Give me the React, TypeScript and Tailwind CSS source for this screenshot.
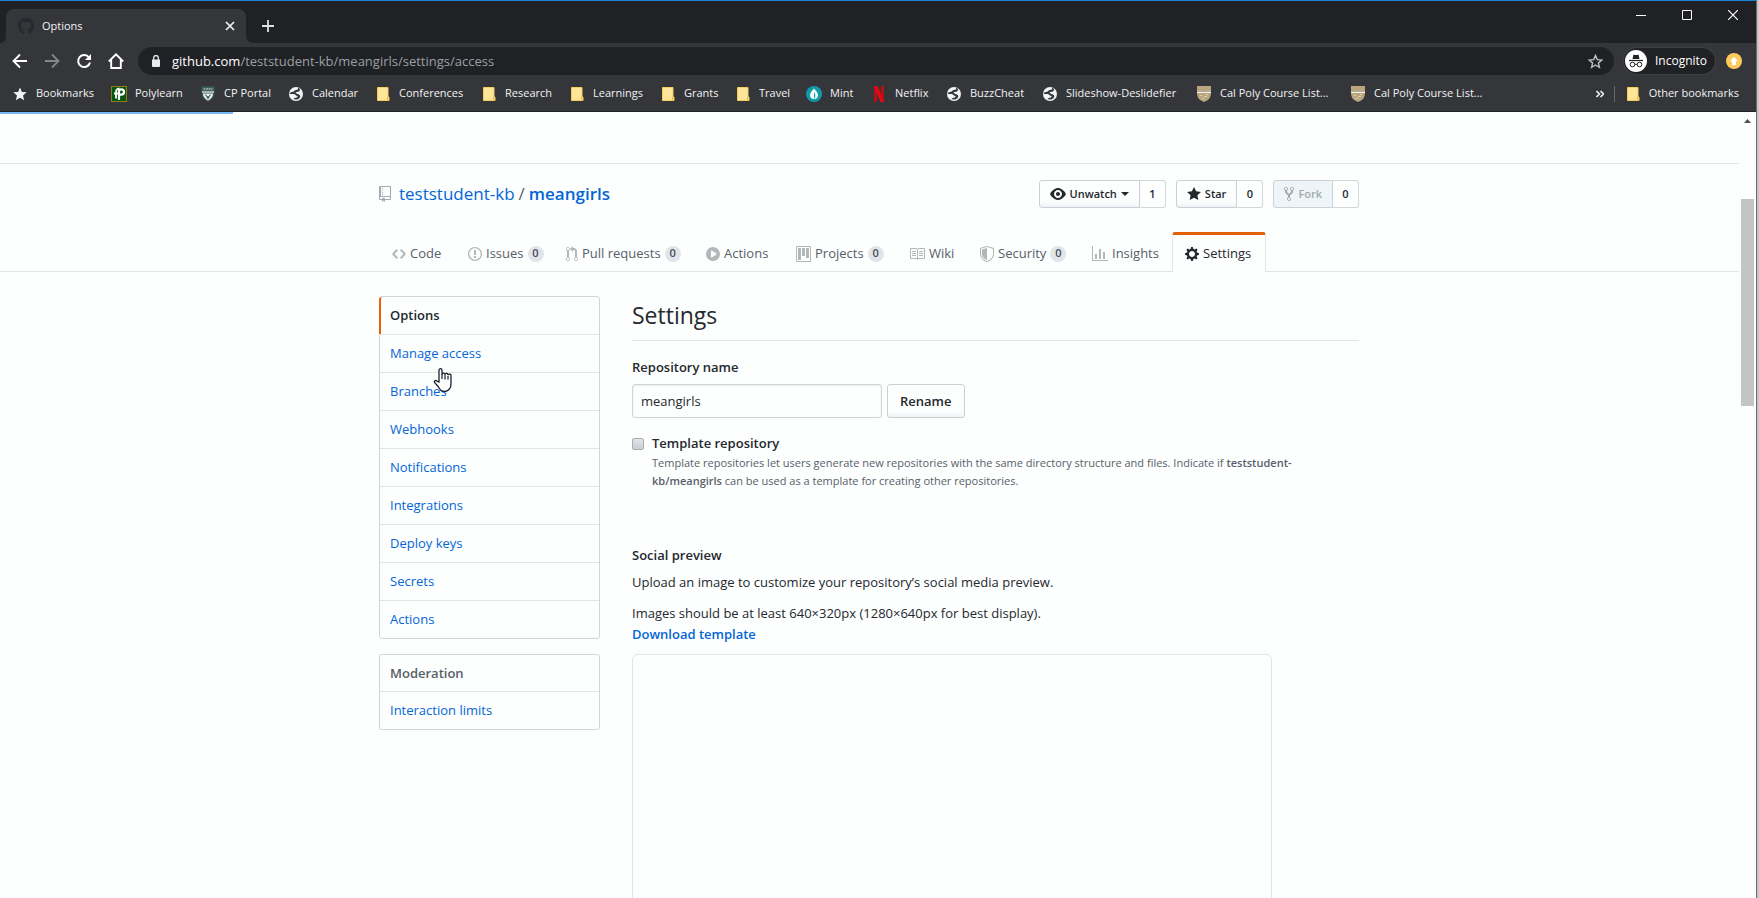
import React from "react";

type IconProps = { d: string; w: number; className?: string; evenodd?: boolean };

function Octicon({ d, w, className = "", evenodd = false }: IconProps) {
  return (
    <svg
      aria-hidden="true"
      width={w}
      height={16}
      viewBox={`0 0 ${w} 16`}
      fill="currentColor"
      className={`shrink-0 ${className}`}
    >
      <path d={d} fillRule={evenodd ? "evenodd" : "nonzero"} />
    </svg>
  );
}

const paths = {
  repo: "M4 9H3V8h1v1zm0-3H3v1h1V6zm0-2H3v1h1V4zm0-2H3v1h1V2zm8-1v12c0 .55-.45 1-1 1H6v2l-1.5-1.5L3 16v-2H1c-.55 0-1-.45-1-1V1c0-.55.45-1 1-1h10c.55 0 1 .45 1 1zm-1 10H1v2h2v-1h3v1h5v-2zm0-10H2v9h9V1z",
  eye: "M8.06 2C3 2 0 8 0 8s3 6 8.06 6C13 14 16 8 16 8s-3-6-7.94-6zM8 12c-2.2 0-4-1.78-4-4 0-2.2 1.8-4 4-4 2.22 0 4 1.8 4 4 0 2.22-1.78 4-4 4zm2-4c0 1.11-.89 2-2 2-1.11 0-2-.89-2-2 0-1.11.89-2 2-2 1.11 0 2 .89 2 2z",
  star: "M14 6l-4.9-.64L7 1 4.9 5.36 0 6l3.6 3.26L2.67 14 7 11.67 11.33 14l-.93-4.74L14 6z",
  fork: "M8 1a1.993 1.993 0 00-1 3.72V6L5 8 3 6V4.72A1.993 1.993 0 002 1a1.993 1.993 0 00-1 3.72V6.5l3 3v1.78A1.993 1.993 0 005 15a1.993 1.993 0 001-3.72V9.5l3-3V4.72A1.993 1.993 0 008 1zM2 4.2C1.34 4.2.8 3.65.8 3c0-.65.55-1.2 1.2-1.2.65 0 1.2.55 1.2 1.2 0 .65-.55 1.2-1.2 1.2zm3 10c-.66 0-1.2-.55-1.2-1.2 0-.65.55-1.2 1.2-1.2.65 0 1.2.55 1.2 1.2 0 .65-.55 1.2-1.2 1.2zm3-10c-.66 0-1.2-.55-1.2-1.2 0-.65.55-1.2 1.2-1.2.65 0 1.2.55 1.2 1.2 0 .65-.55 1.2-1.2 1.2z",
  code: "M9.5 3L8 4.5 11.5 8 8 11.5 9.5 13 14 8 9.5 3zm-5 0L0 8l4.5 5L6 11.5 2.5 8 6 4.5 4.5 3z",
  issue: "M7 2.3c3.14 0 5.7 2.56 5.7 5.7s-2.56 5.7-5.7 5.7A5.71 5.71 0 011.3 8c0-3.14 2.56-5.7 5.7-5.7zM7 1C3.14 1 0 4.14 0 8s3.14 7 7 7 7-3.14 7-7-3.14-7-7-7zm1 3H6v5h2V4zm0 6H6v2h2v-2z",
  pull: "M11 11.28V5c-.03-.78-.34-1.47-.94-2.06C9.46 2.35 8.78 2.03 8 2H7V0L4 3l3 3V4h1c.27.02.48.11.69.31.21.2.3.42.31.69v6.28A1.993 1.993 0 0010 15a1.993 1.993 0 001-3.72zm-1 2.92c-.66 0-1.2-.55-1.2-1.2 0-.65.55-1.2 1.2-1.2.65 0 1.2.55 1.2 1.2 0 .65-.55 1.2-1.2 1.2zM4 3c0-1.11-.89-2-2-2a1.993 1.993 0 00-1 3.72v6.56A1.993 1.993 0 002 15a1.993 1.993 0 001-3.72V4.72c.59-.34 1-.98 1-1.72zm-.8 10c0 .66-.55 1.2-1.2 1.2-.65 0-1.2-.55-1.2-1.2 0-.65.55-1.2 1.2-1.2.65 0 1.2.55 1.2 1.2zM2 4.2C1.34 4.2.8 3.65.8 3c0-.65.55-1.2 1.2-1.2.65 0 1.2.55 1.2 1.2 0 .65-.55 1.2-1.2 1.2z",
  play: "M14 8A7 7 0 110 8a7 7 0 0114 0zm-8.223 3.482l4.599-3.066a.5.5 0 000-.832L5.777 4.518A.5.5 0 005 4.934v6.132a.5.5 0 00.777.416z",
  project: "M10 12h3V2h-3v10zm-4-2h3V2H6v8zm-4 4h3V2H2v12zm-1 1h13V1H1v14zM14 0H1a1 1 0 00-1 1v14a1 1 0 001 1h13a1 1 0 001-1V1a1 1 0 00-1-1z",
  book: "M3 5h4v1H3V5zm0 3h4V7H3v1zm0 2h4V9H3v1zm11-5h-4v1h4V5zm0 2h-4v1h4V7zm0 2h-4v1h4V9zm2-6v9c0 .55-.45 1-1 1H9.5l-1 1-1-1H2c-.55 0-1-.45-1-1V3c0-.55.45-1 1-1h5.5l1 1 1-1H15c.55 0 1 .45 1 1zm-8 .5L7.5 3H2v9h6V3.5zm7-.5H9.5l-.5.5V12h6V3z",
  shield: "M0 2l7-2 7 2v6.02C14 12.69 8.69 16 7 16c-1.69 0-7-3.31-7-7.98V2zm1 .75L7 1l6 1.75v5.268C13 12.104 8.449 15 7 15c-1.449 0-6-2.896-6-6.982V2.75zm1 .75L7 2v12c-1.207 0-5-2.482-5-5.985V3.5z",
  graph: "M16 14v1H0V0h1v14h15zM5 13H3V8h2v5zm4 0H7V3h2v10zm4 0h-2V6h2v7z",
  gear: "M14 8.77v-1.6l-1.94-.64-.45-1.09.88-1.84-1.13-1.13-1.81.91-1.09-.45-.69-1.92h-1.6l-.63 1.94-1.11.45-1.84-.88-1.13 1.13.91 1.81-.45 1.09L0 7.23v1.59l1.94.64.45 1.09-.88 1.84 1.13 1.13 1.81-.91 1.09.45.69 1.92h1.59l.63-1.94 1.11-.45 1.84.88 1.13-1.13-.92-1.81.47-1.09L14 8.75v.02zM7 11c-1.66 0-3-1.34-3-3s1.34-3 3-3 3 1.34 3 3-1.34 3-3 3z",
  mark: "M8 0C3.58 0 0 3.58 0 8c0 3.54 2.29 6.53 5.47 7.59.4.07.55-.17.55-.38 0-.19-.01-.82-.01-1.49-2.01.37-2.53-.49-2.69-.94-.09-.23-.48-.94-.82-1.13-.28-.15-.68-.52-.01-.53.63-.01 1.08.58 1.23.82.72 1.21 1.87.87 2.33.66.07-.52.28-.87.51-1.07-1.78-.2-3.64-.89-3.64-3.95 0-.87.31-1.59.82-2.15-.08-.2-.36-1.02.08-2.12 0 0 .67-.21 2.2.82.64-.18 1.32-.27 2-.27.68 0 1.36.09 2 .27 1.53-1.04 2.2-.82 2.2-.82.44 1.1.16 1.92.08 2.12.51.56.82 1.27.82 2.15 0 3.07-1.87 3.75-3.65 3.95.29.25.54.73.54 1.48 0 1.07-.01 1.93-.01 2.2 0 .21.15.46.55.38A8.013 8.013 0 0016 8c0-4.42-3.58-8-8-8z",
};

/* ---------- Favicons ---------- */

function StarFavicon() {
  return (
    <svg width="16" height="16" viewBox="0 0 16 16" aria-hidden="true" className="shrink-0">
      <path d="M8 1.4l1.9 4.5 4.8.4-3.7 3.2 1.1 4.8L8 11.8l-4.1 2.5L5 9.500 1.300 6.300l4.800-.4z" fill="#f1f3f4" />
    </svg>
  );
}

function PolylearnFavicon() {
  return (
    <svg width="16" height="16" viewBox="0 0 16 16" aria-hidden="true" className="shrink-0">
      <rect x=".5" y=".5" width="15" height="15" fill="#06560c" stroke="#8f7d1c" />
      <path d="M8 14V5.200C8 3.800 9 3.300 10.300 3.300c1.800 0 2.700 1 2.700 2.500S12.100 8.600 10.300 8.600H8" fill="none" stroke="#fff" strokeWidth="2.200" />
      <path d="M5 12.500V5.700C5 4 5.800 2.900 8.500 2.400M3 7.500h4" fill="none" stroke="#fff" strokeWidth="1.800" />
    </svg>
  );
}

function PortalFavicon() {
  return (
    <svg width="16" height="16" viewBox="0 0 16 16" aria-hidden="true" className="shrink-0">
      <path d="M1.500 .5h13v5.500c0 4.500-2.500 8-6.500 9.500-4-1.500-6.500-5-6.500-9.500z" fill="#3d5c5a" />
      <path d="M3.500 3h9" stroke="#9fb3b0" strokeWidth="1.500" strokeDasharray="2 .5" />
      <path d="M2 6h12" stroke="#dfe8e6" strokeWidth="1.300" />
      <path d="M3 7.500h10c0 3-2 5.500-5 7-3-1.500-5-4-5-7z" fill="#e8efee" />
      <path d="M5 8.500l3 2.500 3-2.500M6.500 9.500L8 13l1.500-3.500" fill="none" stroke="#3d5c5a" />
    </svg>
  );
}

function GlobeFavicon() {
  return (
    <svg width="16" height="16" viewBox="0 0 16 16" aria-hidden="true" className="shrink-0">
      <circle cx="8" cy="8" r="7" fill="#f1f3f4" />
      <path
        d="M10 1.500c.5 2-.5 2.300-2 2.500-1.500.2-1.700 1.500-3.300 1.700-1.400.2-2 .6-3.200 1.700 1.200 1.100 2.700.4 4.300.6 2 .3 1.600 1.700 3.200 1.900.9.2.8 1.300-.2 1.700-1.400.5-2.600.4-3.300 1.500 2.400.9 5.500.3 6.600-1.900.5-1.700-.5-2.700-2-2.900-1.300-.2-1.500-1.200-2.700-1.500.6-1.200 2.400-.5 3.700-1.200.7-.6.600-1.900 1-2.600z"
        fill="#35363a"
      />
    </svg>
  );
}

function FolderFavicon() {
  return (
    <svg width="16" height="16" viewBox="0 0 16 16" aria-hidden="true" className="shrink-0">
      <path d="M2.500 1.500h10.500v9.500h1v3.500h-11.500z" fill="#fee597" stroke="#f3cd62" />
      <path d="M12.500 11v3.500" stroke="#e6ba45" />
    </svg>
  );
}

function MintFavicon() {
  return (
    <svg width="16" height="16" viewBox="0 0 16 16" aria-hidden="true" className="shrink-0">
      <circle cx="8" cy="8" r="8" fill="#129aa8" />
      <path d="M8 2.500c2 2.400 4 4.200 4 6.600a4 4 0 01-8 0C4 6.700 6 4.900 8 2.500z" fill="#f4fbfb" />
      <path d="M8 6v6.500c1.600-1 1.900-3.900 0-6.500z" fill="#129aa8" />
    </svg>
  );
}

function NetflixFavicon() {
  return (
    <svg width="16" height="16" viewBox="0 0 16 16" aria-hidden="true" className="shrink-0">
      <path d="M3 0h3v16H3zM10 0h3v16h-3z" fill="#b80f16" />
      <path d="M3 0h3.500l6.500 16H9.500z" fill="#e50914" />
    </svg>
  );
}

function ShieldFavicon() {
  return (
    <svg width="16" height="16" viewBox="0 0 16 16" aria-hidden="true" className="shrink-0">
      <path d="M1 0h14v5.500H1z" fill="#b9a67f" />
      <path d="M1 7h14c0 4.500-2.500 7.500-7 9-4.500-1.500-7-4.500-7-9z" fill="#b9a67f" />
      <path d="M1 5.500h14V7H1z" fill="#f3efe6" />
      <path d="M4 9h2v1H4zM8 10h3v1H8zM6 12h2v1H6zM10 8h2v1h-2z" fill="#ddd0b2" />
    </svg>
  );
}

const bookmarks: { label: string; icon: React.ReactNode; width: string }[] = [
  { label: "Bookmarks", icon: <StarFavicon />, width: "w-[99px]" },
  { label: "Polylearn", icon: <PolylearnFavicon />, width: "w-[89px]" },
  { label: "CP Portal", icon: <PortalFavicon />, width: "w-[88px]" },
  { label: "Calendar", icon: <GlobeFavicon />, width: "w-[87px]" },
  { label: "Conferences", icon: <FolderFavicon />, width: "w-[106px]" },
  { label: "Research", icon: <FolderFavicon />, width: "w-[88px]" },
  { label: "Learnings", icon: <FolderFavicon />, width: "w-[91px]" },
  { label: "Grants", icon: <FolderFavicon />, width: "w-[75px]" },
  { label: "Travel", icon: <FolderFavicon />, width: "w-[71px]" },
  { label: "Mint", icon: <MintFavicon />, width: "w-[65px]" },
  { label: "Netflix", icon: <NetflixFavicon />, width: "w-[75px]" },
  { label: "BuzzCheat", icon: <GlobeFavicon />, width: "w-[96px]" },
  { label: "Slideshow-Deslidefier", icon: <GlobeFavicon />, width: "w-[154px]" },
  { label: "Cal Poly Course List...", icon: <ShieldFavicon />, width: "w-[154px]" },
  { label: "Cal Poly Course List...", icon: <ShieldFavicon />, width: "w-[154px]" },
];

/* ---------- Browser chrome ---------- */

function TabStrip() {
  return (
    <div className="flex h-[42px] items-end justify-between bg-[#202124]">
      <div className="flex items-end">
        <svg width="6" height="8" viewBox="0 0 6 8" aria-hidden="true">
          <path d="M6 0v8H0c4 0 6-3 6-8z" fill="#35363a" />
        </svg>
        <div className="flex h-[34px] w-60 items-center rounded-t-lg bg-[#35363a] pr-2 pl-3">
          <Octicon d={paths.mark} w={16} className="text-[#24292e]" />
          <span className="ml-2 flex-1 text-[11px] text-[#f1f3f4]">Options</span>
          <button aria-label="Close tab" className="flex size-4 items-center justify-center">
            <svg width="10" height="10" viewBox="0 0 10 10" aria-hidden="true">
              <path d="M1 1l8 8M9 1L1 9" stroke="#f1f3f4" strokeWidth="1.700" />
            </svg>
          </button>
        </div>
        <svg width="8" height="8" viewBox="0 0 8 8" aria-hidden="true">
          <path d="M0 0v8h8C3 8 0 5 0 0z" fill="#35363a" />
        </svg>
        <button aria-label="New tab" className="mb-[11px] ml-2 flex size-3 items-center justify-center">
          <svg width="12" height="12" viewBox="0 0 12 12" aria-hidden="true" className="shrink-0">
            <path d="M6 0v12M0 6h12" stroke="#dee1e6" strokeWidth="1.800" />
          </svg>
        </button>
      </div>
      <div className="flex self-start text-white">
        <button aria-label="Minimize" className="flex h-7 w-[46px] items-center justify-center">
          <svg width="10" height="10" viewBox="0 0 10 10" aria-hidden="true"><path d="M0 5.500h10" stroke="#fff" /></svg>
        </button>
        <button aria-label="Maximize" className="flex h-7 w-[46px] items-center justify-center">
          <svg width="10" height="10" viewBox="0 0 10 10" aria-hidden="true"><path d="M.5.5h9v9h-9z" fill="none" stroke="#fff" /></svg>
        </button>
        <button aria-label="Close" className="flex h-7 w-[46px] items-center justify-center">
          <svg width="10" height="10" viewBox="0 0 10 10" aria-hidden="true"><path d="M0 0l10 10M10 0L0 10" stroke="#fff" strokeWidth="1.200" /></svg>
        </button>
      </div>
    </div>
  );
}

function Toolbar() {
  return (
    <div className="flex h-9 items-center bg-[#35363a] pr-[14px] pl-3">
      <div className="flex gap-4">
        <button aria-label="Back">
          <svg width="16" height="16" viewBox="0 0 16 16" fill="none" stroke="#fff" strokeWidth="1.800" aria-hidden="true"><path d="M15 8H2M8 1.500L1.500 8 8 14.500" /></svg>
        </button>
        <button aria-label="Forward">
          <svg width="16" height="16" viewBox="0 0 16 16" fill="none" stroke="#85868a" strokeWidth="1.800" aria-hidden="true"><path d="M1 8h13M8 1.500L14.500 8 8 14.500" /></svg>
        </button>
        <button aria-label="Reload">
          <svg width="16" height="16" viewBox="0 0 16 16" aria-hidden="true">
            <path d="M13 4.500A6 6 0 1014 9.500" fill="none" stroke="#fff" strokeWidth="2" />
            <path d="M15 1v6H9z" fill="#fff" />
          </svg>
        </button>
        <button aria-label="Home">
          <svg width="16" height="16" viewBox="0 0 16 16" fill="none" stroke="#fff" strokeWidth="1.900" aria-hidden="true"><path d="M.8 8.500L8 1.400l7.200 7.100M3.200 7v8h9.600V7" /></svg>
        </button>
      </div>
      <div className="ml-[14px] flex h-7 flex-1 items-center rounded-full bg-[#202124] pr-[11px] pl-[14px]">
        <svg width="8" height="12" viewBox="0 0 8 12" aria-hidden="true">
          <path d="M0 4.500h8V11a1 1 0 01-1 1H1a1 1 0 01-1-1z" fill="#e8eaed" />
          <path d="M1.700 5V2.800a2.300 2.300 0 014.600 0V5" fill="none" stroke="#e8eaed" strokeWidth="1.300" />
        </svg>
        <div
          role="textbox"
          aria-label="Address and search bar"
          contentEditable
          suppressContentEditableWarning
          className="ml-3 flex-1 pt-px text-[13px] text-white"
        >
          github.com<span className="text-[#9aa0a6]">/teststudent-kb/meangirls/settings/access</span>
        </div>
        <button aria-label="Bookmark this tab">
          <svg width="15" height="15" viewBox="0 0 15 15" aria-hidden="true">
            <path d="M7.500 1.500l1.800 4.100 4.500.4-3.400 2.900 1 4.400-3.900-2.300-3.900 2.300 1-4.400L1.200 6l4.500-.4z" fill="none" stroke="#bdc1c6" strokeWidth="1.400" />
          </svg>
        </button>
      </div>
      <button className="ml-[10px] flex h-[26px] w-[91px] items-center rounded-full bg-[#202124] pl-px text-xs text-white ring-1 ring-[#3f4044]">
        <svg width="22" height="22" viewBox="0 0 22 22" aria-hidden="true" className="shrink-0">
          <circle cx="11" cy="11" r="11" fill="#fff" />
          <path d="M7.500 9l1-4.500 1.500.5h2l1.500-.5 1 4.500z" fill="#202124" />
          <path d="M4 10.500h14" stroke="#202124" strokeWidth="1.200" />
          <circle cx="7.500" cy="14.500" r="2.300" fill="none" stroke="#202124" />
          <circle cx="14.500" cy="14.500" r="2.300" fill="none" stroke="#202124" />
          <path d="M9.800 14.300h2.400" stroke="#202124" />
        </svg>
        <span className="ml-2">Incognito</span>
      </button>
      <button aria-label="Update available" className="ml-[11px]">
        <svg width="16" height="16" viewBox="0 0 16 16" aria-hidden="true">
          <circle cx="8" cy="8" r="8" fill="#fdc95c" />
          <path d="M8 3.800l4 4.400h-2V12H6V8.200H4z" fill="#fff" />
        </svg>
      </button>
    </div>
  );
}

function BookmarksBar() {
  return (
    <nav aria-label="Bookmarks" className="flex h-[33px] items-center justify-between border-b border-[#202124] bg-[#35363a] pr-[17px] pb-[3px] pl-3 text-[11px] text-[#f1f3f4]">
      <div className="flex">
        {bookmarks.map((b, i) => (
          <a key={i} href="#" className={`flex shrink-0 items-center gap-2 whitespace-nowrap ${b.width}`}>
            {b.icon}
            {b.label}
          </a>
        ))}
      </div>
      <div className="flex items-center">
        <button aria-label="More bookmarks">
          <svg width="8" height="8" viewBox="0 0 8 8" fill="none" stroke="#f1f3f4" strokeWidth="1.600" aria-hidden="true">
            <path d="M.5 1l3 3-3 3M4.500 1l3 3-3 3" />
          </svg>
        </button>
        <span className="mx-[10px] h-4 w-px bg-[#65676b]" />
        <a href="#" className="flex items-center gap-2 whitespace-nowrap">
          <FolderFavicon />
          Other bookmarks
        </a>
      </div>
    </nav>
  );
}

/* ---------- Repository page ---------- */

function Count({ n }: { n: number }) {
  return (
    <span className="flex h-4 min-w-4 items-center justify-center rounded-full bg-[#e1e4e8] px-1 text-[11px] font-semibold text-[#444d56]">
      {n}
    </span>
  );
}

type Tab = { label: string; icon: string; iconWidth: number; width: string; count?: number; evenodd?: boolean };

const tabs: Tab[] = [
  { label: "Code", icon: paths.code, iconWidth: 14, width: "w-[76px]" },
  { label: "Issues", icon: paths.issue, iconWidth: 14, width: "w-[98px]", count: 0 },
  { label: "Pull requests", icon: paths.pull, iconWidth: 12, width: "w-[140px]", count: 0 },
  { label: "Actions", icon: paths.play, iconWidth: 14, width: "w-[90px]" },
  { label: "Projects", icon: paths.project, iconWidth: 15, width: "w-[113px]", count: 0, evenodd: true },
  { label: "Wiki", icon: paths.book, iconWidth: 16, width: "w-[71px]" },
  { label: "Security", icon: paths.shield, iconWidth: 14, width: "w-28", count: 0, evenodd: true },
  { label: "Insights", icon: paths.graph, iconWidth: 16, width: "w-20" },
];

function SocialButton({
  children,
  count,
  disabled = false,
}: {
  children: React.ReactNode;
  count: number;
  disabled?: boolean;
}) {
  return (
    <li className="flex h-7 text-[11px] font-semibold">
      <button
        disabled={disabled}
        className={`flex items-center gap-1 rounded-l-[3px] border border-[#cdd1d5] px-[10px] ${
          disabled ? "bg-[#edf5f8] text-[#a3a8ad]" : "bg-linear-to-b from-[#fdfefe] from-80% to-[#eff3f6] text-[#24292e]"
        }`}
      >
        {children}
      </button>
      <a href="#" className="flex w-[26px] items-center justify-center rounded-r-[3px] border border-l-0 border-[#d4d7da] text-[#24292e]">
        {count}
      </a>
    </li>
  );
}

function RepoHeader() {
  return (
    <header className="mt-[51px] border-b border-[#e1e4e8]">
      <div className="border-t border-[#e1e4e8]">
        <div className="mx-auto max-w-[981px] pr-px">
          <div className="flex h-[68px] items-start justify-between pt-4">
            <h1 className="flex items-center text-[17px] leading-7 text-[#586069]">
              <Octicon d={paths.repo} w={12} className="mr-2 text-[#a3aab1]" />
              <a href="#" className="text-[#0366d6]">teststudent-kb</a>
              <span className="mx-1">/</span>
              <a href="#" className="font-semibold text-[#0366d6]">meangirls</a>
            </h1>
            <ul className="flex gap-[10px]">
              <SocialButton count={1}>
                <Octicon d={paths.eye} w={16} />
                Unwatch
                <svg width="8" height="4" viewBox="0 0 8 4" aria-hidden="true" fill="currentColor"><path d="M0 0h8L4 4z" /></svg>
              </SocialButton>
              <SocialButton count={0}>
                <Octicon d={paths.star} w={14} />
                Star
              </SocialButton>
              <SocialButton count={0} disabled>
                <Octicon d={paths.fork} w={10} />
                Fork
              </SocialButton>
            </ul>
          </div>
          <nav aria-label="Repository" className="-mb-px flex h-10 text-[13px] text-[#586069]">
            {tabs.map((t) => (
              <a key={t.label} href="#" className={`flex shrink-0 items-center whitespace-nowrap pt-[3px] pl-[13px] ${t.width}`}>
                <Octicon d={t.icon} w={t.iconWidth} evenodd={t.evenodd} className="mr-1 text-[#b4b7ba]" />
                {t.label}
                {t.count !== undefined && (
                  <span className="ml-1">
                    <Count n={t.count} />
                  </span>
                )}
              </a>
            ))}
            <a
              href="#"
              aria-current="page"
              className="ml-[13px] flex w-[94px] shrink-0 items-center rounded-t-[3px] border-x border-t-[3px] border-x-[#e1e4e8] border-t-[#e36209] bg-[#fdfefe] pl-3 whitespace-nowrap text-[#24292e]"
            >
              <Octicon d={paths.gear} w={14} className="mr-1" />
              Settings
            </a>
          </nav>
        </div>
      </div>
    </header>
  );
}

function HandCursor() {
  return (
    <svg
      width="20"
      height="25"
      viewBox="0 0 20 25"
      aria-hidden="true"
      className="pointer-events-none absolute top-[33px] left-[53px] z-10"
    >
      <path
        d="M6 14V2.200a1.500 1.500 0 013 0V6.500a1.400 1.400 0 013 .2 1.400 1.400 0 013 .5 1.400 1.400 0 013 1V16c0 4-2.500 7.500-6.500 7.500-3.500 0-4.500-1.800-6-4.500L1.500 14.500c-.8-1.600 1-2.700 2.500-1.400z"
        fill="#fff"
        stroke="#1b2030"
        strokeWidth="1.300"
      />
      <path d="M9 6v5M12 7v4.500M15 8v3.500" stroke="#1b2030" strokeWidth="1.200" />
    </svg>
  );
}

const menu = ["Manage access", "Branches", "Webhooks", "Notifications", "Integrations", "Deploy keys", "Secrets", "Actions"];

function Sidebar() {
  return (
    <aside className="w-[221px] shrink-0 text-[13px] leading-5">
      <nav aria-label="Settings" className="rounded-[3px] border border-[#d1d5da]">
        <a
          href="#"
          aria-current="page"
          className="-ml-px block rounded-tl-[3px] border-l-2 border-l-[#e36209] pt-2 pr-[10px] pb-[9px] pl-[9px] font-semibold text-[#24292e]"
        >
          Options
        </a>
        {menu.map((m) => (
          <div key={m} className="relative border-t border-[#e1e4e8]">
            <a href="#" className="block px-[10px] pt-2 pb-[9px] text-[#0366d6]">
              {m}
            </a>
            {m === "Manage access" && <HandCursor />}
          </div>
        ))}
      </nav>
      <nav aria-labelledby="moderation" className="mt-[15px] rounded-[3px] border border-[#d1d5da]">
        <h3 id="moderation" className="px-[10px] py-2 font-semibold text-[#586069]">
          Moderation
        </h3>
        <a href="#" className="block border-t border-[#e1e4e8] px-[10px] pt-2 pb-[9px] text-[#0366d6]">
          Interaction limits
        </a>
      </nav>
    </aside>
  );
}

function SettingsForm() {
  return (
    <main className="min-w-0 flex-1 text-[13px] leading-[21px] text-[#24292e]">
      <h2 className="h-[45px] border-b border-[#e1e4e8] pt-[3px] text-[23px] leading-8">Settings</h2>
      <form onSubmit={(e) => e.preventDefault()}>
        <label htmlFor="repo-name" className="mt-4 block font-semibold">
          Repository name
        </label>
        <div className="mt-[6px] flex gap-[5px]">
          <input
            id="repo-name"
            defaultValue="meangirls"
            className="h-[34px] w-[250px] rounded-[3px] border border-[#d1d5da] px-2 shadow-[inset_0_1px_2px_rgba(27,31,35,0.075)]"
          />
          <button className="h-[34px] rounded-[3px] border border-[#cdd1d5] bg-linear-to-b from-[#fdfefe] from-80% to-[#eff3f6] px-3 font-semibold">
            Rename
          </button>
        </div>
        <div className="mt-[15px] flex items-start">
          <input
            id="template"
            type="checkbox"
            className="mt-[5px] size-3 appearance-none rounded-xs border border-[#a9adb2] bg-linear-to-b from-[#e4e5e9] to-[#cbcdd3]"
          />
          <div className="ml-2">
            <label htmlFor="template" className="block font-semibold">
              Template repository
            </label>
            <p className="max-w-[670px] text-[11px] leading-[18px] text-[#586069]">
              Template repositories let users generate new repositories with the same directory structure and files. Indicate if{" "}
              <strong className="font-semibold">teststudent-</strong>
              <strong className="font-semibold">kb/meangirls</strong> can be used as a template for creating other
              repositories.
            </p>
          </div>
        </div>
      </form>
      <section className="mt-[55px]">
        <h3 className="font-semibold">Social preview</h3>
        <p className="mt-[6px]">Upload an image to customize your repository’s social media preview.</p>
        <p className="mt-[10px]">
          Images should be at least 640×320px (1280×640px for best display).
          <br />
          <a href="#" className="font-semibold text-[#0366d6]">
            Download template
          </a>
        </p>
        <div className="mt-[9px] h-80 max-w-[640px] rounded-md border border-[#e1e4e8]" />
      </section>
    </main>
  );
}

function Scrollbar() {
  return (
    <div aria-hidden="true" className="flex w-[17px] shrink-0 flex-col items-center pt-[7px]">
      <svg width="7" height="4" viewBox="0 0 7 4">
        <path d="M0 4l3.500-4L7 4z" fill="#505050" />
      </svg>
      <div className="mt-[76px] h-[207px] w-[13px] bg-[#c4c4c4]" />
    </div>
  );
}

export default function App() {
  return (
    <div className="flex h-screen overflow-hidden bg-[#fdfefe] font-['Open_Sans','Noto_Sans',sans-serif]">
      <div className="flex min-w-0 flex-1 flex-col">
        <div className="h-px shrink-0 bg-[#1683d8]" />
        <TabStrip />
        <Toolbar />
        <BookmarksBar />
        <div className="flex min-h-0 flex-1">
          <div className="relative min-w-0 flex-1 overflow-hidden">
            <div role="progressbar" aria-label="Loading" className="absolute top-0 left-0 h-0.5 w-[233px] bg-[#79b8ff]" />
            <RepoHeader />
            <div className="mx-auto flex max-w-[981px] gap-8 pt-6 pr-px">
              <Sidebar />
              <SettingsForm />
            </div>
          </div>
          <Scrollbar />
        </div>
      </div>
      <div className="w-[3px] shrink-0 border-l border-[#6b6b6b] bg-[#c6c6c6]" />
    </div>
  );
}
